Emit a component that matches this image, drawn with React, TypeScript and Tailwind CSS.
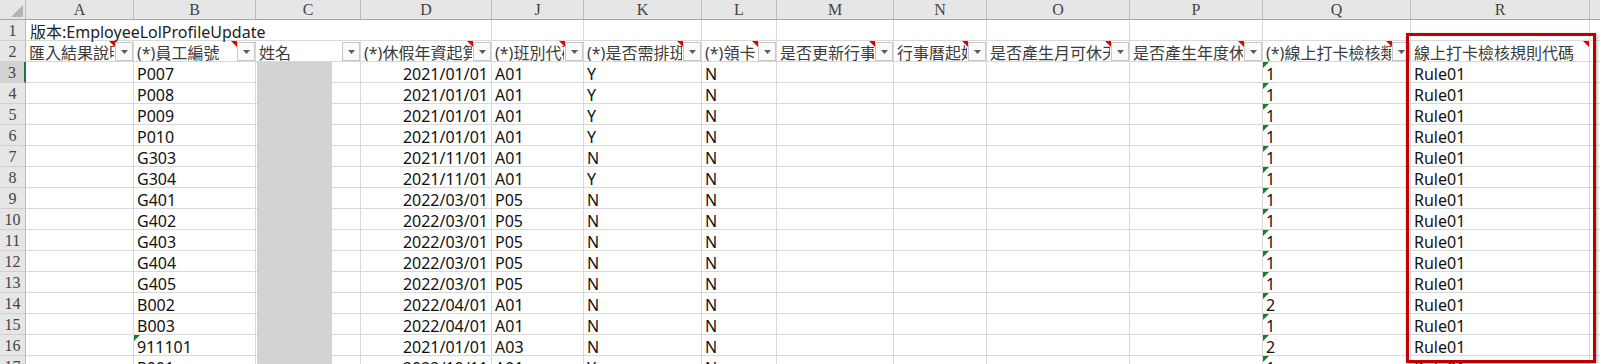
import clsx from 'clsx';

const COLS = [
  { key: 'A', w: 'w-[108px]', head: '匯入結果說明', note: true },
  { key: 'B', w: 'w-[122px]', head: '(*)員工編號', note: true },
  { key: 'C', w: 'w-[105px]', head: '姓名', note: false },
  { key: 'D', w: 'w-[131px]', head: '(*)休假年資起算日', note: true },
  { key: 'J', w: 'w-[92px]', head: '(*)班別代碼', note: true },
  { key: 'K', w: 'w-[118px]', head: '(*)是否需排班', note: true },
  { key: 'L', w: 'w-[75px]', head: '(*)領卡', note: true },
  { key: 'M', w: 'w-[117px]', head: '是否更新行事曆', note: true },
  { key: 'N', w: 'w-[93px]', head: '行事曆起始日', note: true },
  { key: 'O', w: 'w-[143px]', head: '是否產生月可休天數', note: true },
  { key: 'P', w: 'w-[133px]', head: '是否產生年度休假', note: true },
  { key: 'Q', w: 'w-[148px]', head: '(*)線上打卡檢核類型', note: true },
  { key: 'R', w: 'w-[179px]', head: '線上打卡檢核規則代碼', note: true },
] as const;

// [員工編號, 休假年資起算日, 班別代碼, 是否需排班, 領卡, 線上打卡檢核類型]
const ROWS = [
  ['P007', '2021/01/01', 'A01', 'Y', 'N', '1'],
  ['P008', '2021/01/01', 'A01', 'Y', 'N', '1'],
  ['P009', '2021/01/01', 'A01', 'Y', 'N', '1'],
  ['P010', '2021/01/01', 'A01', 'Y', 'N', '1'],
  ['G303', '2021/11/01', 'A01', 'N', 'N', '1'],
  ['G304', '2021/11/01', 'A01', 'Y', 'N', '1'],
  ['G401', '2022/03/01', 'P05', 'N', 'N', '1'],
  ['G402', '2022/03/01', 'P05', 'N', 'N', '1'],
  ['G403', '2022/03/01', 'P05', 'N', 'N', '1'],
  ['G404', '2022/03/01', 'P05', 'N', 'N', '1'],
  ['G405', '2022/03/01', 'P05', 'N', 'N', '1'],
  ['B002', '2022/04/01', 'A01', 'N', 'N', '2'],
  ['B003', '2022/04/01', 'A01', 'N', 'N', '1'],
  ['911101', '2021/01/01', 'A03', 'N', 'N', '2'],
  ['P001', '2022/10/11', 'A01', 'Y', 'N', '1'],
];

const FONT = "font-['Noto_Sans','Noto_Sans_CJK_TC',sans-serif]";

function GreenMark() {
  return (
    <svg className="absolute left-0 top-0" width="6" height="6" viewBox="0 0 6 6">
      <polygon points="0,0 6,0 0,6" fill="#1b7a2f" />
    </svg>
  );
}

function RedMark({ className }: { className: string }) {
  return (
    <svg className={clsx('absolute top-0', className)} width="6" height="6" viewBox="0 0 6 6">
      <polygon points="0,0 6,0 6,6" fill="#e00000" />
    </svg>
  );
}

function FilterButton() {
  return (
    <div className="absolute right-0 bottom-0 flex h-[19px] w-[18px] items-center justify-center border border-[#c8c8c8] bg-[#fafafa]">
      <svg width="7" height="4" viewBox="0 0 7 4">
        <polygon points="0,0 7,0 3.5,4" fill="#5a5a5a" />
      </svg>
    </div>
  );
}

function RowLabel({ n, active }: { n: number; active?: boolean }) {
  return (
    <div
      className={clsx(
        "flex w-[26px] shrink-0 items-center justify-center border-b border-[#d0d0d0] font-['Liberation_Serif',serif] text-[16px] leading-none text-[#444]",
        active ? 'border-r-2 border-r-[#217346] bg-[#d2d2d2]' : 'border-r border-r-[#bdbdbd] bg-[#e6e6e6]',
      )}
    >
      <span className="pt-[2px]">{n}</span>
    </div>
  );
}

function Cell({
  w,
  children,
  right,
  green,
}: {
  w: string;
  children?: React.ReactNode;
  right?: boolean;
  green?: boolean;
}) {
  return (
    <div
      className={clsx(
        'relative flex shrink-0 items-center overflow-hidden whitespace-nowrap border-r border-b border-[#d9d9d9] px-[3px] pt-[3px] text-[16px] leading-none text-[#111]',
        w,
        right ? 'justify-end' : 'justify-start',
      )}
    >
      {green && <GreenMark />}
      {children}
    </div>
  );
}

export default function App() {
  return (
    <div className={clsx('relative h-[364px] w-[1600px] overflow-hidden bg-white', FONT)}>
      {/* column letters */}
      <div className="flex h-[20px] border-b border-[#a6a6a6] bg-[#e6e6e6]">
        <div className="relative w-[26px] shrink-0 border-r border-[#bdbdbd]">
          <svg className="absolute right-[2px] bottom-[2px]" width="12" height="12" viewBox="0 0 12 12">
            <polygon points="12,0 12,12 0,12" fill="#b4b4b4" />
          </svg>
        </div>
        {COLS.map((c) => (
          <div
            key={c.key}
            className={clsx(
              "flex shrink-0 items-center justify-center border-r border-[#bdbdbd] font-['Liberation_Serif',serif] text-[16px] leading-none text-[#444]",
              c.w,
            )}
          >
            {c.key}
          </div>
        ))}
        <div className="flex-1" />
      </div>

      {/* row 1 */}
      <div className="flex h-[21px]">
        <RowLabel n={1} />
        <div className="flex w-[335px] shrink-0 items-center whitespace-nowrap border-b border-[#d9d9d9] px-[4px] pt-[3px] text-[16px] leading-none text-[#222]">
          版本:EmployeeLolProfileUpdate
        </div>
        {COLS.slice(3).map((c) => (
          <Cell key={c.key} w={c.w} />
        ))}
        <div className="flex-1 border-b border-[#d9d9d9]" />
      </div>

      {/* row 2 - header with filters */}
      <div className="flex h-[21px]">
        <RowLabel n={2} />
        {COLS.map((c) => {
          const filter = c.key !== 'R';
          return (
            <div
              key={c.key}
              className={clsx(
                'relative flex shrink-0 items-center border-r border-b border-[#d9d9d9] text-[16px] leading-none text-[#3c3c3c]',
                c.w,
              )}
            >
              <div
                className={clsx(
                  'overflow-hidden whitespace-nowrap pl-[3px] pt-[3px]',
                  filter ? 'w-[calc(100%-19px)]' : 'w-full',
                )}
              >
                {c.head}
              </div>
              {c.note && <RedMark className={filter ? 'right-[18px]' : 'right-0'} />}
              {filter && <FilterButton />}
            </div>
          );
        })}
        <div className="flex-1 border-b border-[#d9d9d9]" />
      </div>

      {/* data rows */}
      {ROWS.map((r, i) => {
        const [id, date, shift, sched, card, kind] = r;
        return (
          <div key={i} className="flex h-[21px]">
            <RowLabel n={i + 3} active={i === 0} />
            <Cell w={COLS[0].w} />
            <Cell w={COLS[1].w} green={id === '911101'}>
              {id}
            </Cell>
            <Cell w={COLS[2].w} />
            <Cell w={COLS[3].w} right>
              {date}
            </Cell>
            <Cell w={COLS[4].w}>{shift}</Cell>
            <Cell w={COLS[5].w}>{sched}</Cell>
            <Cell w={COLS[6].w}>{card}</Cell>
            <Cell w={COLS[7].w} />
            <Cell w={COLS[8].w} />
            <Cell w={COLS[9].w} />
            <Cell w={COLS[10].w} />
            <Cell w={COLS[11].w} green>
              {kind}
            </Cell>
            <Cell w={COLS[12].w}>Rule01</Cell>
            <div className="flex-1 border-b border-[#d9d9d9]" />
          </div>
        );
      })}

      {/* redacted names */}
      <div className="absolute left-[257px] top-[62px] bottom-0 w-[75px] bg-[#d3d3d3]" />

      {/* highlight box */}
      <div className="absolute left-[1406px] top-[33px] h-[330px] w-[190px] border-[3px] border-[#c00000] shadow-[1px_1px_3px_rgba(0,0,0,0.35)]" />
    </div>
  );
}
